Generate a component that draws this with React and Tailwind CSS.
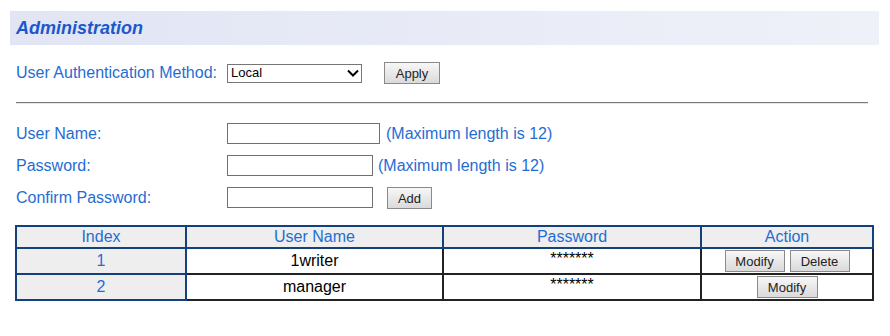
import React from "react";

const btn =
  "h-[22px] border border-[#8a8a8a] bg-linear-to-b from-[#f7f7f7] to-[#dadada] text-[13px] text-[#222] flex items-center justify-center leading-none";

function Chevron() {
  return (
    <svg width="12" height="8" viewBox="0 0 12 8" className="mr-[2px]">
      <path d="M1 1.5 L6 6.5 L11 1.5" fill="none" stroke="#000" strokeWidth="2" />
    </svg>
  );
}

export default function App() {
  const blue = "text-[#1f6dd3]";
  return (
    <div className="w-[890px] h-[336px] bg-white font-['Liberation_Sans',Arial,sans-serif] overflow-hidden">
      <div className="ml-[10px] pt-[11px]">
        <div className="w-[869px] h-[34px] bg-linear-to-r from-[#e1e5f4] to-[#eff1f9] flex items-center pl-[6px]">
          <span className="text-[18px] font-bold italic text-[#1b58cc] leading-none">Administration</span>
        </div>
      </div>

      <div className="pl-[16px]">
        <div className="mt-[17px] h-[22px] flex items-center">
          <div className={`w-[211px] text-[16px] ${blue}`}>User Authentication Method:</div>
          <div className="w-[135px] h-[19px] border border-[#767676] flex items-center justify-between pl-[3px] text-[13px] text-black">
            <span>Local</span>
            <Chevron />
          </div>
          <button className={`${btn} ml-[22px] w-[56px]`}>Apply</button>
        </div>

        <div className="mt-[18px] w-[852px] border-t border-t-[#7a7a7a] border-b border-b-[#e4e4e4]" />

        <div className="mt-[19px] h-[21px] flex items-center">
          <div className={`w-[211px] text-[16px] ${blue}`}>User Name:</div>
          <div className="w-[153px] h-[21px] border border-[#707070]" />
          <span className={`ml-[6px] text-[16px] ${blue}`}>(Maximum length is 12)</span>
        </div>
        <div className="mt-[11px] h-[21px] flex items-center">
          <div className={`w-[211px] text-[16px] ${blue}`}>Password:</div>
          <div className="w-[146px] h-[21px] border border-[#707070]" />
          <span className={`ml-[5px] text-[16px] ${blue}`}>(Maximum length is 12)</span>
        </div>
        <div className="mt-[11px] h-[22px] flex items-start">
          <div className={`w-[211px] h-[21px] flex items-center text-[16px] ${blue}`}>Confirm Password:</div>
          <div className="w-[146px] h-[21px] border border-[#707070]" />
          <button className={`${btn} ml-[14px] w-[45px]`}>Add</button>
        </div>

        <table className="mt-[16px] -ml-[1px] border-collapse w-[858px] text-[16px] table-fixed">
          <colgroup>
            <col className="w-[170px]" />
            <col className="w-[257px]" />
            <col className="w-[258px]" />
            <col className="w-[172px]" />
          </colgroup>
          <thead>
            <tr className="h-[22px]">
              {["Index", "User Name", "Password", "Action"].map((h) => (
                <th key={h} className={`border-2 border-[#14407e] bg-[#eeeeee] font-normal ${blue} p-0 leading-[18px]`}>
                  {h}
                </th>
              ))}
            </tr>
          </thead>
          <tbody>
            <tr className="h-[24px]">
              <td className={`border-2 border-[#14407e] bg-[#eeeeee] text-center ${blue} p-0`}>1</td>
              <td className="border-2 border-[#222] text-center text-black p-0">1writer</td>
              <td className="border-2 border-[#222] text-center text-black p-0 align-top leading-[20px]">*******</td>
              <td className="border-2 border-[#222] p-0">
                <div className="flex justify-center gap-[5px]">
                  <button className={`${btn} w-[60px]`}>Modify</button>
                  <button className={`${btn} w-[60px]`}>Delete</button>
                </div>
              </td>
            </tr>
            <tr className="h-[25px]">
              <td className={`border-2 border-[#14407e] bg-[#eeeeee] text-center ${blue} p-0`}>2</td>
              <td className="border-2 border-[#222] text-center text-black p-0">manager</td>
              <td className="border-2 border-[#222] text-center text-black p-0 align-top leading-[20px]">*******</td>
              <td className="border-2 border-[#222] p-0">
                <div className="flex justify-center">
                  <button className={`${btn} w-[61px]`}>Modify</button>
                </div>
              </td>
            </tr>
          </tbody>
        </table>
      </div>
    </div>
  );
}
